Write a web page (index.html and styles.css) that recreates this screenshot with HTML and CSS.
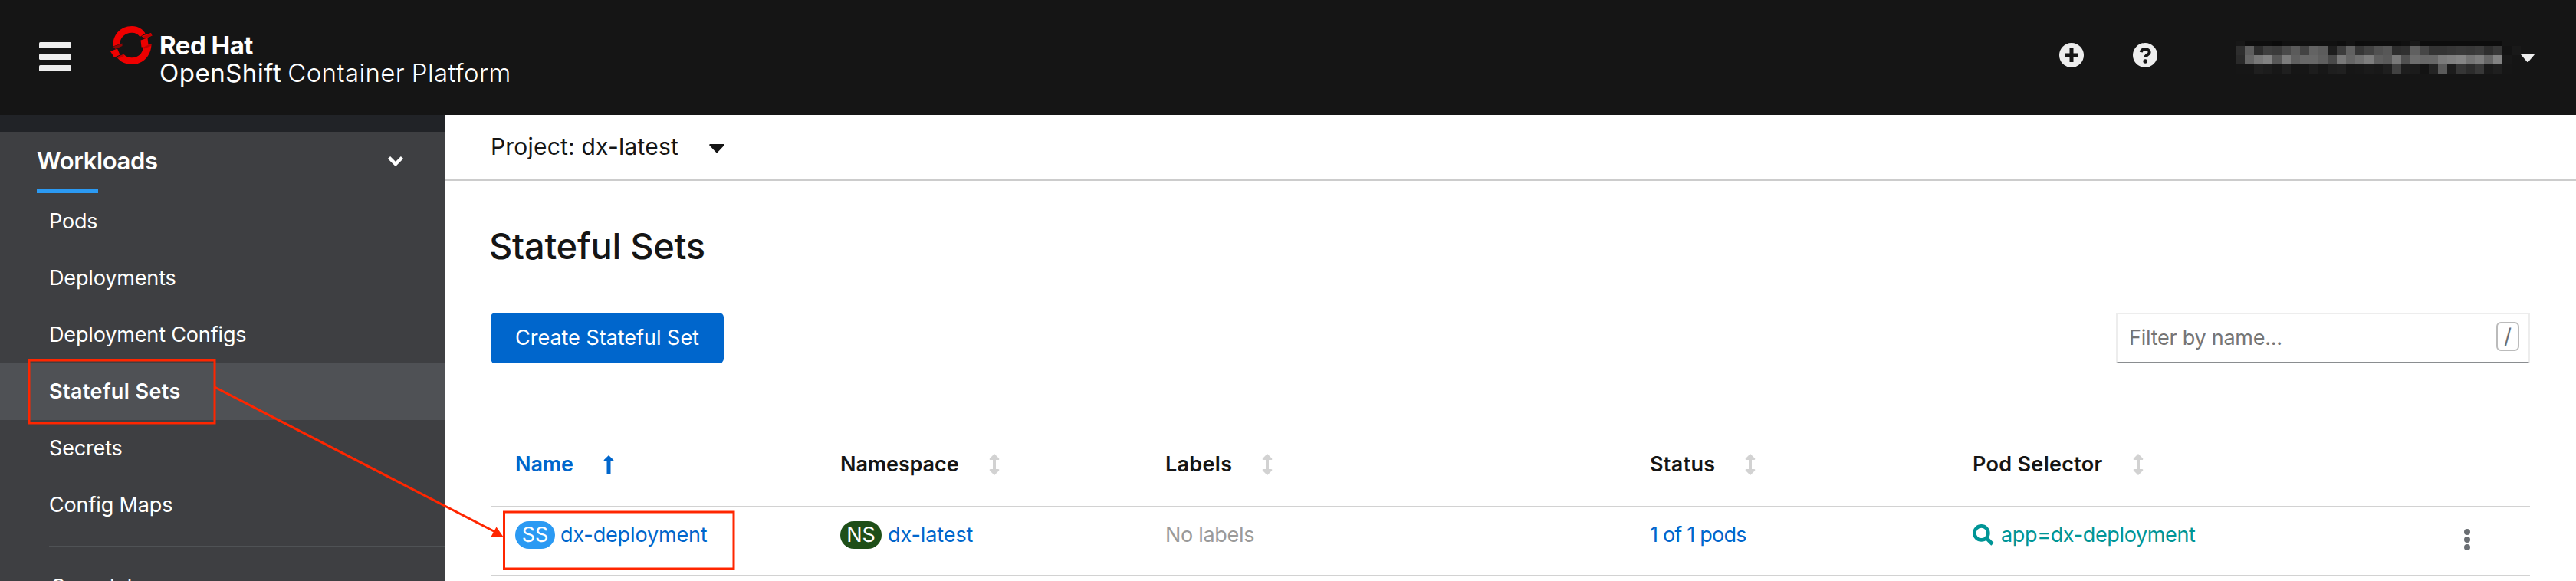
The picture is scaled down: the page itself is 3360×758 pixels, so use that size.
FILE: index.html
```html
<!DOCTYPE html>
<html lang="en">
<head>
<meta charset="utf-8">
<title>Stateful Sets</title>
<link rel="stylesheet" href="styles.css">
</head>
<body>
<header class="masthead">
  <svg class="burger" width="42" height="38" viewBox="0 0 42 38"><g fill="#ededed"><rect y="0" width="42" height="8" rx="1.5"/><rect y="15" width="42" height="8" rx="1.5"/><rect y="30" width="42" height="8" rx="1.5"/></g></svg>
  <div class="brand">
    <svg class="logo" width="56" height="52" viewBox="0 0 56 52">
      <path fill="#e00" d="M3.5 27.5C2.500 13 13 1 28 1 37 1 42.500 5.500 45.500 10.500L38.500 15C36 11.500 32.500 9.700 28 9.700 18.500 9.700 12 17 12.600 24.200Z"/>
      <path fill="#e00" d="M39.500 19.500L48.500 16.500 49.500 25.500 53.500 24C53.500 40 42.500 51 28 51 19.500 51 12.500 47.500 8.500 41.500L17.500 38C20.500 41 24 42.300 28 42.300 36.500 42.300 42 36.500 43 28.500L40.500 28.500Z"/>
      <path fill="#e00" d="M40.500 14L53 10 54.500 13.500 45 17.500ZM0 34L9 30.500 12.500 38.500 5 42Z"/>
      <path fill="#b30000" d="M44 17.500L54.500 13.500 53 10.500 43 14.500ZM3.500 28L15.500 23.500 15.500 27 6.500 31ZM8.500 41.500L18.500 37 17 41 10 43.500ZM43 28.500L53.500 24 53 27 44 30.500Z" opacity=".8"/>
    </svg>
    <div class="wordmark">
      <div class="wm-top">Red Hat</div>
      <div class="wm-bottom"><span class="wm-a">OpenShift</span> <span class="wm-b">Container Platform</span></div>
    </div>
  </div>
  <div class="tools">
    <svg width="32" height="32" viewBox="0 0 32 32"><circle cx="16" cy="16" r="16" fill="#ededed"/><path d="M16 7v18M7 16h18" stroke="#151515" stroke-width="5"/></svg>
    <svg width="32" height="32" viewBox="0 0 32 32"><circle cx="16" cy="16" r="16" fill="#ededed"/><path d="M10.800 12.200C11.300 9.500 13.500 8 16.200 8 19.300 8 21.600 9.900 21.600 12.300 21.600 15.700 16.300 15.400 16.300 19" fill="none" stroke="#151515" stroke-width="4"/><circle cx="16.200" cy="24" r="2.800" fill="#151515"/></svg>
    <svg class="mosaic" id="mosaic" width="372" height="42" viewBox="0 0 372 42" shape-rendering="crispEdges"></svg>
    <svg class="user-caret" width="18" height="12" viewBox="0 0 18 12"><path fill="#ededed" d="M1 0H17Q18.300 .5 17.500 1.700L10 10.500Q9 11.500 8 10.500L.5 1.700Q-.3 .5 1 0Z"/></svg>
  </div>
</header>
<div class="page">
  <nav class="sidebar">
    <div class="group"><span>Workloads</span>
      <svg width="22" height="14" viewBox="0 0 22 14"><path d="M2.500 2.500L11 11 19.500 2.500" fill="none" stroke="#fff" stroke-width="4.500"/></svg></div>
    <div class="marker"></div>
    <ul class="items">
      <li>Pods</li>
      <li>Deployments</li>
      <li>Deployment Configs</li>
      <li class="active">Stateful Sets</li>
      <li>Secrets</li>
      <li>Config Maps</li>
    </ul>
    <div class="divider"></div>
    <ul class="items second"><li>Cron Jobs</li></ul>
  </nav>
  <main class="content">
    <div class="project"><span>Project: dx-latest</span>
      <svg width="20" height="12" viewBox="0 0 20 12"><path fill="#151515" d="M1 0H19Q20.300 .5 19.500 1.700L11 10.700Q10 11.700 9 10.700L.5 1.700Q-.3 .5 1 0Z"/></svg></div>
    <h1>Stateful Sets</h1>
    <div class="toolbar">
      <button class="create">Create Stateful Set</button>
      <div class="filter"><span>Filter by name...</span><kbd>/</kbd></div>
    </div>
    <div class="table">
      <div class="row head">
        <div class="sorted">Name <svg width="14" height="24" viewBox="0 0 14 24"><path fill="#06c" d="M7 0L13.200 6Q14 8 12 8H9.500V24H4.500V8H2Q0 8 .8 6Z"/></svg></div>
        <div>Namespace <svg class="sort" viewBox="0 0 14 28"><path d="M7 0L13 6Q14 8 12 8H9V20H12Q14 20 13 22L7 28 1 22Q0 20 2 20H5V8H2Q0 8 1 6Z"/></svg></div>
        <div class="wide">Labels <svg class="sort" viewBox="0 0 14 28"><path d="M7 0L13 6Q14 8 12 8H9V20H12Q14 20 13 22L7 28 1 22Q0 20 2 20H5V8H2Q0 8 1 6Z"/></svg></div>
        <div class="wide">Status <svg class="sort" viewBox="0 0 14 28"><path d="M7 0L13 6Q14 8 12 8H9V20H12Q14 20 13 22L7 28 1 22Q0 20 2 20H5V8H2Q0 8 1 6Z"/></svg></div>
        <div class="wide">Pod Selector <svg class="sort" viewBox="0 0 14 28"><path d="M7 0L13 6Q14 8 12 8H9V20H12Q14 20 13 22L7 28 1 22Q0 20 2 20H5V8H2Q0 8 1 6Z"/></svg></div>
        <div></div>
      </div>
      <div class="row body">
        <div class="link"><span class="badge ss">SS</span><span class="dep">dx-deployment</span></div>
        <div class="link"><span class="badge ns">NS</span><span class="lat">dx-latest</span></div>
        <div class="muted">No labels</div>
        <div class="link pods">1 of 1 pods</div>
        <div class="selector"><svg width="28" height="28" viewBox="0 0 28 28"><circle cx="11.400" cy="11.400" r="9" fill="none" stroke="#009596" stroke-width="4.600"/><path d="M17.800 17.800L26 26" stroke="#009596" stroke-width="5"/></svg><span>app=dx-deployment</span></div>
        <div class="kebab"><svg width="8" height="28" viewBox="0 0 8 28"><g fill="#6a6e73"><circle cx="4" cy="4" r="4"/><circle cx="4" cy="14" r="4"/><circle cx="4" cy="24" r="4"/></g></svg></div>
      </div>
    </div>
  </main>
</div>
<svg class="annotations" width="3360" height="758" viewBox="0 0 3360 758">
  <g fill="none" stroke="#ff2600" stroke-width="3"><rect x="38" y="470" width="242" height="82"/><rect x="657.500" y="668" width="299.500" height="74"/><path d="M280 505L646 694"/></g>
  <path fill="#ff2600" d="M657 701L640 701 647.500 687.500Z"/>
</svg>
<script src="mosaic.js"></script>
</body>
</html>
```
FILE: styles.css
```css
* { box-sizing: border-box; }
body { margin: 0; width: 3360px; height: 758px; overflow: hidden; background: #fff; color: #151515; font: 27px/40px Inter, "Liberation Sans", sans-serif; letter-spacing: -.3px; white-space: nowrap; }
svg { display: block; flex: none; }
.masthead { display: flex; height: 150px; background: #151515; padding-left: 51px; }
.burger { margin-top: 55px; }
.brand { display: flex; margin-left: 51px; padding-top: 33px; color: #fff; font-size: 33px; line-height: 36px; }
.wordmark { margin-left: 8px; padding-top: 8px; }
.wm-top { font-weight: 700; letter-spacing: -.5px; }
.wm-bottom { word-spacing: -1px; }
.wm-a { letter-spacing: .5px; }
.wm-b { font-weight: 300; letter-spacing: .4px; }
.tools { display: flex; margin-left: auto; padding: 56px 54px 0 0; }
.tools svg + svg { margin-left: 64px; }
.tools .mosaic { margin: -2px 0 0 102px; }
.tools .user-caret { margin: 14px 0 0 0; }
.page { display: flex; height: 608px; }
.sidebar { width: 580px; background: #3e3f42; border-top: 22px solid #212327; color: #fff; overflow: hidden; letter-spacing: -.15px; }
.group { display: flex; justify-content: space-between; align-items: center; height: 74px; padding: 2px 53px 0 48px; font-size: 31px; font-weight: 600; letter-spacing: -.35px; }
.marker { width: 80px; height: 6px; margin-left: 48px; background: #2b9af3; }
.items { list-style: none; margin: 0; padding: 0; }
.items li { height: 74px; padding-left: 64px; line-height: 74px; }
.items li.active { background: #4f5155; font-weight: 600; letter-spacing: .4px; }
.divider { height: 2px; margin: 16px 0 0 64px; background: #4f5255; }
.second { margin-top: 15px; }
.second li { padding-left: 66px; }
.content { flex: 1; }
.project { display: flex; height: 86px; padding-left: 60px; border-bottom: 2px solid #ccc; font-size: 30px; line-height: 82px; letter-spacing: .2px; }
.project svg { margin: 38px 0 0 40px; }
h1 { margin: 52px 0 0 58px; font-size: 47px; line-height: 66px; font-weight: 500; letter-spacing: -.3px; }
.toolbar { display: flex; justify-content: space-between; margin: 54px 60px 0; }
.create { width: 304px; height: 66px; padding: 0; border: 0; border-radius: 6px; background: #06c; color: #fff; font: inherit; letter-spacing: -.02px; }
.filter { display: flex; justify-content: space-between; width: 540px; height: 66px; padding: 10px 12px 0 15px; border: 2px solid #ededed; border-bottom-color: #8a8d90; color: #757575; line-height: 42px; letter-spacing: -.25px; }
kbd { width: 30px; height: 38px; border: 2px solid #bbb; border-radius: 6px; font: 27px/34px Inter, sans-serif; text-align: center; color: #6a6e73; }
.table { margin: 74px 60px 0; }
.row { display: grid; grid-template-columns: 424px 424px 632px 421px 630px 1fr; padding-left: 32px; border-bottom: 2px solid #d2d2d2; }
.row > div { display: flex; align-items: center; }
.head { height: 114px; font-weight: 600; letter-spacing: -.1px; }
.head > div { height: 116px; }
.head .wide { letter-spacing: .3px; }
.head svg { margin-left: 39px; }
.sort { width: 14px; height: 28px; fill: #d2d2d2; }
.sorted, .link { color: #06c; }
.body { height: 90px; align-items: start; }
.body > div { height: 72px; }
.badge { height: 36px; border-radius: 18px; color: #fff; line-height: 36px; text-align: center; letter-spacing: 0; }
.ss { width: 52px; background: #2b9af3; }
.ns { width: 54px; background: #1e4f18; }
.dep { margin-left: 7px; letter-spacing: -.15px; }
.lat { margin-left: 8px; letter-spacing: -.1px; }
.muted { color: #9a9a9a; }
.body .pods { letter-spacing: -.8px; }
.selector { color: #009596; }
.selector span { margin-left: 9px; letter-spacing: -.35px; }
.body .kebab { height: 84px; padding-left: 11px; }
.annotations { position: absolute; left: 0; top: 0; }
```
FILE: mosaic.js
```js
// Pixelated user name: grey levels for each 12px cell, by row.
var rows = [
  { y: 0, h: 6, v: "180f0e0e0b1111111111110e140d0e0e0e0e111a0d0d0d0d0d0d0d0d0d" },
  { y: 6, h: 12, v: "2e5e2d3f3b4a5b43635c1d3c61364251572d3060463434373a383c2e381319" },
  { y: 18, h: 12, v: "2a667882577c6068685f497865707d5f5a79506d67687b8085747d668218" },
  { y: 30, h: 12, v: "16161f1c171f16161d171e2016171a181e411d1b13245b1c362c381a1f16" }
];
var svg = document.getElementById("mosaic");
rows.forEach(function (row) {
  row.v.match(/../g).forEach(function (c, i) {
    var r = document.createElementNS("http://www.w3.org/2000/svg", "rect");
    r.setAttribute("x", i * 12);
    r.setAttribute("y", row.y);
    r.setAttribute("width", 12);
    r.setAttribute("height", row.h);
    r.setAttribute("fill", "#" + c + c + c);
    svg.appendChild(r);
  });
});
```
